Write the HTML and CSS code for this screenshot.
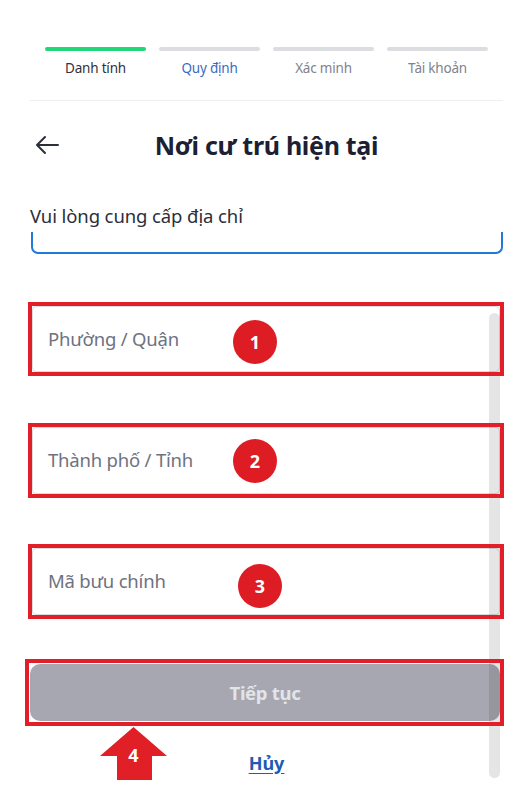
FILE: index.html
```html
<!DOCTYPE html>
<html lang="vi">
<head>
<meta charset="utf-8">
<title>Nơi cư trú hiện tại</title>
<link rel="stylesheet" href="styles.css">
</head>
<body>
<div class="page">
  <div class="steps">
    <div class="step">
      <div class="bar bar-done"></div>
      <div class="step-label label-done">Danh tính</div>
    </div>
    <div class="step">
      <div class="bar"></div>
      <div class="step-label label-active">Quy định</div>
    </div>
    <div class="step">
      <div class="bar"></div>
      <div class="step-label">Xác minh</div>
    </div>
    <div class="step">
      <div class="bar"></div>
      <div class="step-label">Tài khoản</div>
    </div>
  </div>
  <div class="divider"></div>

  <div class="header">
    <div class="back">
      <svg width="25" height="20" viewBox="0 0 25 20" fill="none" stroke="#2b2f3b" stroke-width="2" stroke-linecap="round" stroke-linejoin="round">
        <path d="M23 10H2M10 2L2 10L10 18"/>
      </svg>
    </div>
    <h1 class="title">Nơi cư trú hiện tại</h1>
    <div></div>
  </div>

  <div class="section-label">Vui lòng cung cấp địa chỉ</div>
  <div class="address-box"></div>

  <div class="annot annot-1">
    <div class="field">Phường / Quận</div>
    <span class="badge badge-1">1</span>
  </div>
  <div class="annot annot-2">
    <div class="field">Thành phố / Tỉnh</div>
    <span class="badge badge-2">2</span>
  </div>
  <div class="annot annot-3">
    <div class="field">Mã bưu chính</div>
    <span class="badge badge-3">3</span>
  </div>
  <div class="annot annot-4">
    <button class="btn-next" type="button">Tiếp tục</button>
  </div>

  <div class="cancel"><a href="#">Hủy</a></div>

  <div class="scrollbar"></div>

  <div class="arrow4">
    <svg width="67" height="53" viewBox="0 0 67 53">
      <polygon points="33.5,0 67,29 52,29 52,53 17,53 17,29 0,29" fill="#e01f26"/>
    </svg>
    <span class="arrow-num">4</span>
  </div>
</div>
</body>
</html>
```

FILE: styles.css
```css
* { box-sizing: border-box; }

html, body {
  margin: 0;
  padding: 0;
  background: #ffffff;
}

body {
  font-family: "Noto Sans", "Open Sans", sans-serif;
  color: #2a2f3b;
  width: 518px;
  height: 788px;
  overflow: hidden;
}

.page {
  position: relative;
  padding: 47px 15px 0 30px;
  height: 788px;
}

.steps {
  margin-left: 15px;
  width: 443px;
  display: grid;
  grid-template-columns: repeat(4, 1fr);
  column-gap: 13px;
}

.step {
  display: flex;
  flex-direction: column;
  align-items: center;
}

.bar {
  width: 100%;
  height: 4px;
  border-radius: 2px;
  background: #dcdde0;
}

.bar-done { background: #22d67a; }

.step-label {
  margin-top: 8px;
  font-size: 13.5px;
  line-height: 18px;
  color: #80838c;
  letter-spacing: -0.2px;
}

.label-done { color: #2d3240; }
.label-active { color: #3a6bc2; }

.divider {
  margin-top: 23px;
  border-top: 1px solid #efeff1;
}

.header {
  margin-top: 26px;
  display: grid;
  grid-template-columns: 40px 1fr 40px;
  align-items: center;
  height: 36px;
}

.back {
  padding-left: 5px;
  display: flex;
  align-items: center;
}

.back svg { display: block; }

.title {
  margin: 0;
  text-align: center;
  font-size: 25px;
  line-height: 36px;
  font-weight: 700;
  color: #1c2033;
  letter-spacing: -0.3px;
}

.section-label {
  margin-top: 41px;
  font-size: 18.5px;
  line-height: 24px;
  color: #2a2f3b;
  letter-spacing: -0.1px;
}

.address-box {
  margin-top: 4px;
  margin-left: 1px;
  height: 22px;
  border: 2.5px solid #1f7ad8;
  border-top: none;
  border-radius: 0 0 7px 7px;
}

.annot {
  position: relative;
  margin-left: -2px;
  width: 476px;
  padding: 4px;
}

.annot::after {
  content: "";
  position: absolute;
  inset: 0;
  border: 4px solid #e21f28;
  z-index: 2;
  pointer-events: none;
}

.annot-1 { margin-top: 48px; height: 74px; }
.annot-2 { margin-top: 47px; height: 75px; }
.annot-3 { margin-top: 46px; height: 75px; }
.annot-4 { margin-top: 40px; height: 67px; margin-left: -5px; width: 479px; padding: 5px 4px 5px 5px; }

.field {
  height: 100%;
  border: 1px solid #d9dade;
  border-radius: 4px;
  padding: 19px 15px 0;
  font-size: 18.5px;
  line-height: 26px;
  color: #6e7280;
  letter-spacing: -0.2px;
  background: #ffffff;
}

.badge {
  position: absolute;
  width: 44px;
  height: 44px;
  border-radius: 50%;
  background: #dd1c24;
  color: #ffffff;
  font-weight: 700;
  font-size: 18px;
  line-height: 44px;
  text-align: center;
  z-index: 3;
}

.badge-1 { left: 205px; top: 18px; }
.badge-2 { left: 205px; top: 16px; }
.badge-3 { left: 210px; top: 20px; }

.btn-next {
  display: block;
  width: 100%;
  height: 100%;
  border: none;
  border-radius: 10px;
  background: #a6a7b0;
  color: #e3e4e9;
  font-family: "Noto Sans", "Open Sans", sans-serif;
  font-size: 18.5px;
  font-weight: 700;
  letter-spacing: -0.3px;
  padding: 0;
}

.cancel {
  margin-top: 25px;
  text-align: center;
  font-size: 18px;
  line-height: 24px;
  font-weight: 700;
}

.cancel a {
  color: #1d5bb5;
  text-decoration: underline;
  text-underline-offset: 3px;
}

.scrollbar {
  position: absolute;
  left: 489px;
  top: 313px;
  width: 11px;
  height: 465px;
  border-radius: 6px;
  background: rgba(0, 0, 0, 0.1);
  z-index: 1;
}

.arrow4 {
  position: absolute;
  left: 100px;
  top: 727px;
  width: 67px;
  height: 53px;
  z-index: 3;
}

.arrow4 svg { display: block; }

.arrow-num {
  position: absolute;
  left: 0;
  right: 0;
  top: 17px;
  text-align: center;
  color: #ffffff;
  font-weight: 700;
  font-size: 18px;
  line-height: 22px;
}
```
